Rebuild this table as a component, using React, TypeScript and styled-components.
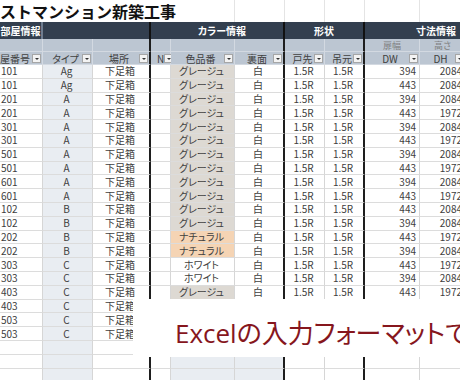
import styled, { createGlobalStyle } from "styled-components";

type Align = "left" | "center" | "right";
type Swatch = "グレージュ" | "ナチュラル" | "ホワイト";

interface Rec {
  room: string;
  type: string;
  color: Swatch;
  dw: number;
  dh: number;
}

const COLS = [43, 50, 58, 20, 64, 50, 40, 40, 55, 46, 43];
const TEMPLATE = COLS.map((w) => `${w}px`).join(" ");
const THICK = new Set([2, 5, 7]);
const ALIGNS: Align[] = ["left", "center", "center", "center", "center", "center", "center", "center", "right", "right", "right"];
const HEADS = ["屋番号", "タイプ", "場所", "N", "色品番", "裏面", "戸先", "吊元", "DW", "DH", ""];
const SUBS = ["", "", "", "", "", "", "", "", "扉幅", "高さ", ""];
const SHADED_EMPTY = new Set([1, 4, 5]);
// rows from here on sit under the caption card on the right-hand side
const COVERED_FROM = 17;

const SWATCH: Record<Swatch, string> = {
  グレージュ: "#ddd9d3",
  ナチュラル: "#f5d4b4",
  ホワイト: "#ffffff",
};

const rows: Rec[] = [
  { room: "101", type: "Ag", color: "グレージュ", dw: 394, dh: 2084 },
  { room: "101", type: "Ag", color: "グレージュ", dw: 443, dh: 2084 },
  { room: "201", type: "A", color: "グレージュ", dw: 394, dh: 2084 },
  { room: "201", type: "A", color: "グレージュ", dw: 443, dh: 1972 },
  { room: "301", type: "A", color: "グレージュ", dw: 394, dh: 2084 },
  { room: "301", type: "A", color: "グレージュ", dw: 443, dh: 1972 },
  { room: "501", type: "A", color: "グレージュ", dw: 394, dh: 2084 },
  { room: "501", type: "A", color: "グレージュ", dw: 443, dh: 1972 },
  { room: "601", type: "A", color: "グレージュ", dw: 394, dh: 2084 },
  { room: "601", type: "A", color: "グレージュ", dw: 443, dh: 1972 },
  { room: "102", type: "B", color: "グレージュ", dw: 443, dh: 2084 },
  { room: "102", type: "B", color: "グレージュ", dw: 394, dh: 2084 },
  { room: "202", type: "B", color: "ナチュラル", dw: 443, dh: 1972 },
  { room: "202", type: "B", color: "ナチュラル", dw: 394, dh: 2084 },
  { room: "303", type: "C", color: "ホワイト", dw: 443, dh: 1972 },
  { room: "303", type: "C", color: "ホワイト", dw: 394, dh: 2084 },
  { room: "403", type: "C", color: "グレージュ", dw: 443, dh: 1972 },
  { room: "403", type: "C", color: "グレージュ", dw: 394, dh: 2084 },
  { room: "503", type: "C", color: "グレージュ", dw: 443, dh: 1972 },
  { room: "503", type: "C", color: "グレージュ", dw: 394, dh: 2084 },
];

export default function App() {
  return (
    <>
      <GlobalStyle />
      <Sheet>
        <Row $h={22}>
          <TitleCell>ストマンション新築工事</TitleCell>
          {COLS.slice(5).map((_, i) => (
            <BlankCell key={i} />
          ))}
        </Row>

        <Row $h={17}>
          <BandCell $span="1 / 2" $line="#6f7d90">部屋情報</BandCell>
          <BandCell $span="2 / 4" $line="#111" />
          <BandCell $span="4 / 7" $line="#111" $shift={10}>カラー情報</BandCell>
          <BandCell $span="7 / 9" $line="#111">形状</BandCell>
          <BandCell $span="9 / 12" $line="transparent">寸法情報</BandCell>
        </Row>

        <Row $h={13}>
          {SUBS.map((s, i) => (
            <HeadCell key={i} $thick={THICK.has(i)}>
              <SubLabel>{s}</SubLabel>
            </HeadCell>
          ))}
        </Row>

        <Row $h={13}>
          {HEADS.map((h, i) => (
            <HeadCell key={i} $thick={THICK.has(i)} $low>
              <Label $left={i === 0}>{h}</Label>
              {h && <DropBtn />}
            </HeadCell>
          ))}
        </Row>

        {rows.map((r, n) => {
          const covered = n >= COVERED_FROM;
          const values = [r.room, r.type, "下足箱", "", r.color, "白", "1.5R", "1.5R", String(r.dw), String(r.dh), ""];
          return (
            <Row key={n} $h={13.8}>
              {values.map((v, i) => (
                <Cell
                  key={i}
                  $align={ALIGNS[i]}
                  $thick={THICK.has(i)}
                  $bg={i === 1 ? "#e9edf2" : i === 4 ? SWATCH[r.color] : undefined}
                >
                  {covered && i > 2 ? "" : v}
                </Cell>
              ))}
            </Row>
          );
        })}

        {[0, 1, 2].map((n) => (
          <Row key={`e${n}`} $h={13.8}>
            {COLS.map((_, i) => (
              <Cell key={i} $thick={THICK.has(i)} $bg={SHADED_EMPTY.has(i) ? "#e9edf2" : undefined} />
            ))}
          </Row>
        ))}

        <Caption>Excelの入力フォーマットで</Caption>
      </Sheet>
    </>
  );
}

const GlobalStyle = createGlobalStyle`
  html, body {
    margin: 0;
    padding: 0;
    background: #fff;
    overflow: hidden;
  }
  body {
    font-family: "Noto Sans CJK JP", "Noto Sans", sans-serif;
  }
`;

const Sheet = styled.div`
  position: relative;
  width: 509px;
  color: #404040;
`;

const Row = styled.div<{ $h: number }>`
  display: grid;
  grid-template-columns: ${TEMPLATE};
  height: ${(p) => p.$h}px;
`;

const TitleCell = styled.div`
  grid-column: 1 / 6;
  box-sizing: border-box;
  border-right: 1px solid #e4e4e4;
  font-size: 16px;
  font-weight: 700;
  line-height: 22px;
  color: #111;
  white-space: nowrap;
`;

const BlankCell = styled.div`
  box-sizing: border-box;
  border-right: 1px solid #e4e4e4;
`;

const BandCell = styled.div<{ $span: string; $line: string; $shift?: number }>`
  grid-column: ${(p) => p.$span};
  box-sizing: border-box;
  display: flex;
  align-items: center;
  justify-content: center;
  padding-left: ${(p) => p.$shift ?? 0}px;
  background: #333f4f;
  border-right: 2px solid ${(p) => p.$line};
  color: #fff;
  font-size: 10px;
  font-weight: 700;
  white-space: nowrap;
  font-feature-settings: "palt";
`;

const HeadCell = styled.div<{ $thick?: boolean; $low?: boolean }>`
  box-sizing: border-box;
  display: flex;
  align-items: center;
  padding-top: ${(p) => (p.$low ? 1 : 0)}px;
  background: #bcc6d2;
  border-right: ${(p) => (p.$thick ? "2px solid #1e1e1e" : "1px solid #d3d9e1")};
  border-bottom: 1px solid #d3d9e1;
`;

const Label = styled.span<{ $left?: boolean }>`
  flex: 1;
  text-align: ${(p) => (p.$left ? "left" : "center")};
  padding-left: ${(p) => (p.$left ? 0 : 6)}px;
  font-size: 10px;
  line-height: 1;
  color: #404040;
  white-space: nowrap;
  font-feature-settings: "palt";
`;

const SubLabel = styled.span`
  flex: 1;
  text-align: center;
  font-size: 9px;
  line-height: 1;
  color: #7f7f7f;
  font-feature-settings: "palt";
`;

const DropBtn = styled.span`
  flex: none;
  box-sizing: border-box;
  width: 9px;
  height: 9px;
  margin-right: 1px;
  border: 1px solid #a6a6a6;
  background: #f3f3f3;
  display: flex;
  align-items: center;
  justify-content: center;

  &::after {
    content: "";
    border-left: 2px solid transparent;
    border-right: 2px solid transparent;
    border-top: 2px solid #333;
  }
`;

const Cell = styled.div<{ $align?: Align; $bg?: string; $thick?: boolean }>`
  box-sizing: border-box;
  display: flex;
  align-items: center;
  justify-content: ${(p) =>
    p.$align === "left" ? "flex-start" : p.$align === "right" ? "flex-end" : "center"};
  padding: 0 3px 0 1px;
  background: ${(p) => p.$bg ?? "#fff"};
  border-right: ${(p) => (p.$thick ? "2px solid #1e1e1e" : "1px solid #d6d6d6")};
  border-bottom: 1px solid #dcdcdc;
  font-size: 10px;
  line-height: 1;
  color: #404040;
  white-space: nowrap;
  font-feature-settings: "palt";
`;

const Caption = styled.div`
  position: absolute;
  left: 133px;
  top: 299px;
  width: 400px;
  height: 58px;
  box-sizing: border-box;
  display: flex;
  align-items: flex-end;
  padding: 0 0 11px 42px;
  background: #fff;
  font-family: "Open Sans", "Noto Sans CJK JP", sans-serif;
  font-size: 26px;
  line-height: 1;
  color: #86161d;
  white-space: nowrap;
  font-feature-settings: "palt";
`;
